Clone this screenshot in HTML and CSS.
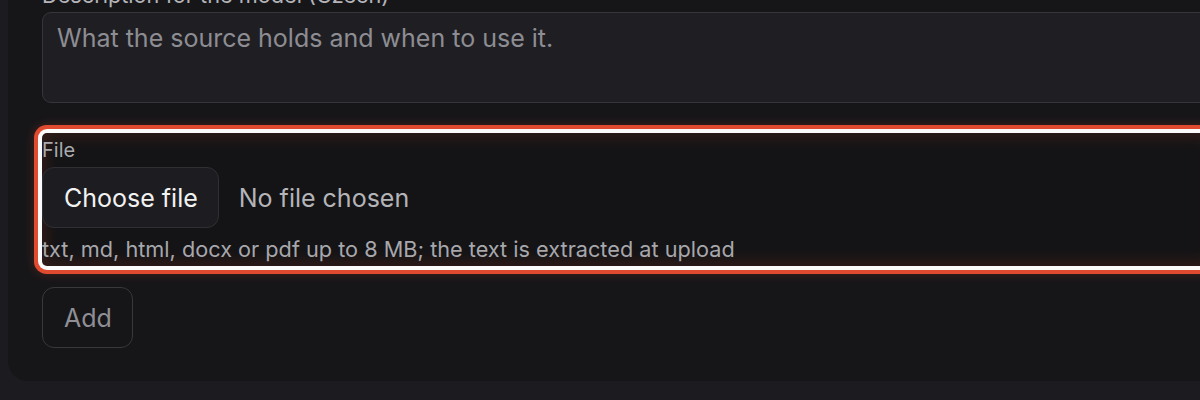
FILE: index.html
```html
<!DOCTYPE html>
<html lang="en">
<head>
<meta charset="utf-8">
<title>Add source</title>
<link rel="stylesheet" href="styles.css">
</head>
<body>
<main class="card">
  <div class="field">
    <label class="label label-top" for="desc">Description for the model (Czech)</label>
    <textarea id="desc" class="textarea" placeholder="What the source holds and when to use it."></textarea>
  </div>
  <div class="field field-file highlight">
    <span class="label">File</span>
    <div class="file-row">
      <button type="button" class="btn btn-file">Choose file</button>
      <span class="file-name">No file chosen</span>
    </div>
    <p class="hint">txt, md, html, docx or pdf up to 8 MB; the text is extracted at upload</p>
  </div>
  <div class="actions">
    <button type="button" class="btn btn-add">Add</button>
  </div>
</main>
</body>
</html>
```

FILE: styles.css
```css
html, body {
  margin: 0;
  padding: 0;
  background: #1c1c20;
  overflow: hidden;
  height: 400px;
}

body {
  font-family: Inter, "Noto Sans", sans-serif;
}

.card {
  margin: -44px 0 0 8px;
  width: 1240px;
  background: #161619;
  border-radius: 0 0 20px 20px;
  padding: 26px 34px 33px 34px;
  box-sizing: border-box;
  display: flex;
  flex-direction: column;
}

.field {
  display: flex;
  flex-direction: column;
}

.label {
  font-size: 20px;
  line-height: 24px;
  color: #a9a9ae;
}

.label-top {
  font-size: 21.7px;
  line-height: 26px;
  color: #b4b4b9;
  margin-bottom: 4px;
}

.textarea {
  height: 91px;
  box-sizing: border-box;
  background: #1f1f23;
  border: 1px solid #35353a;
  border-radius: 9px;
  padding: 10px 14px;
  font-family: Inter, "Noto Sans", sans-serif;
  font-size: 25px;
  line-height: 30px;
  color: #e0e0e0;
  resize: none;
  outline: none;
}

.textarea::placeholder {
  color: #8d8d93;
}

.field-file {
  margin-top: 30px;
  height: 133px;
  box-sizing: border-box;
  padding-top: 5px;
}

.highlight {
  border-radius: 5px;
  box-shadow:
    0 0 0 4px #fbfbfb,
    0 0 0 8px #e04b30,
    0 0 10px 9px rgba(224, 75, 48, 0.2),
    inset 0 0 16px 3px rgba(200, 70, 45, 0.2);
  background: #141416;
}

.file-row {
  display: flex;
  align-items: center;
  gap: 20px;
  margin-top: 5px;
}

.btn {
  font-family: Inter, "Noto Sans", sans-serif;
  font-size: 25px;
  height: 61px;
  box-sizing: border-box;
  border-radius: 12px;
  padding: 0 20px 0 21px;
  cursor: pointer;
}

.btn-file {
  background: #1d1d21;
  border: 1px solid #2f2f34;
  color: #f2f2f2;
}

.file-name {
  font-size: 25px;
  color: #b4b4b9;
}

.hint {
  margin: 8px 0 0 0;
  font-size: 21.7px;
  line-height: 26px;
  color: #a7a7ac;
}

.actions {
  margin-top: 21px;
  display: flex;
}

.btn-add {
  background: transparent;
  border: 1px solid #38383d;
  color: #8f8f95;
}
```
